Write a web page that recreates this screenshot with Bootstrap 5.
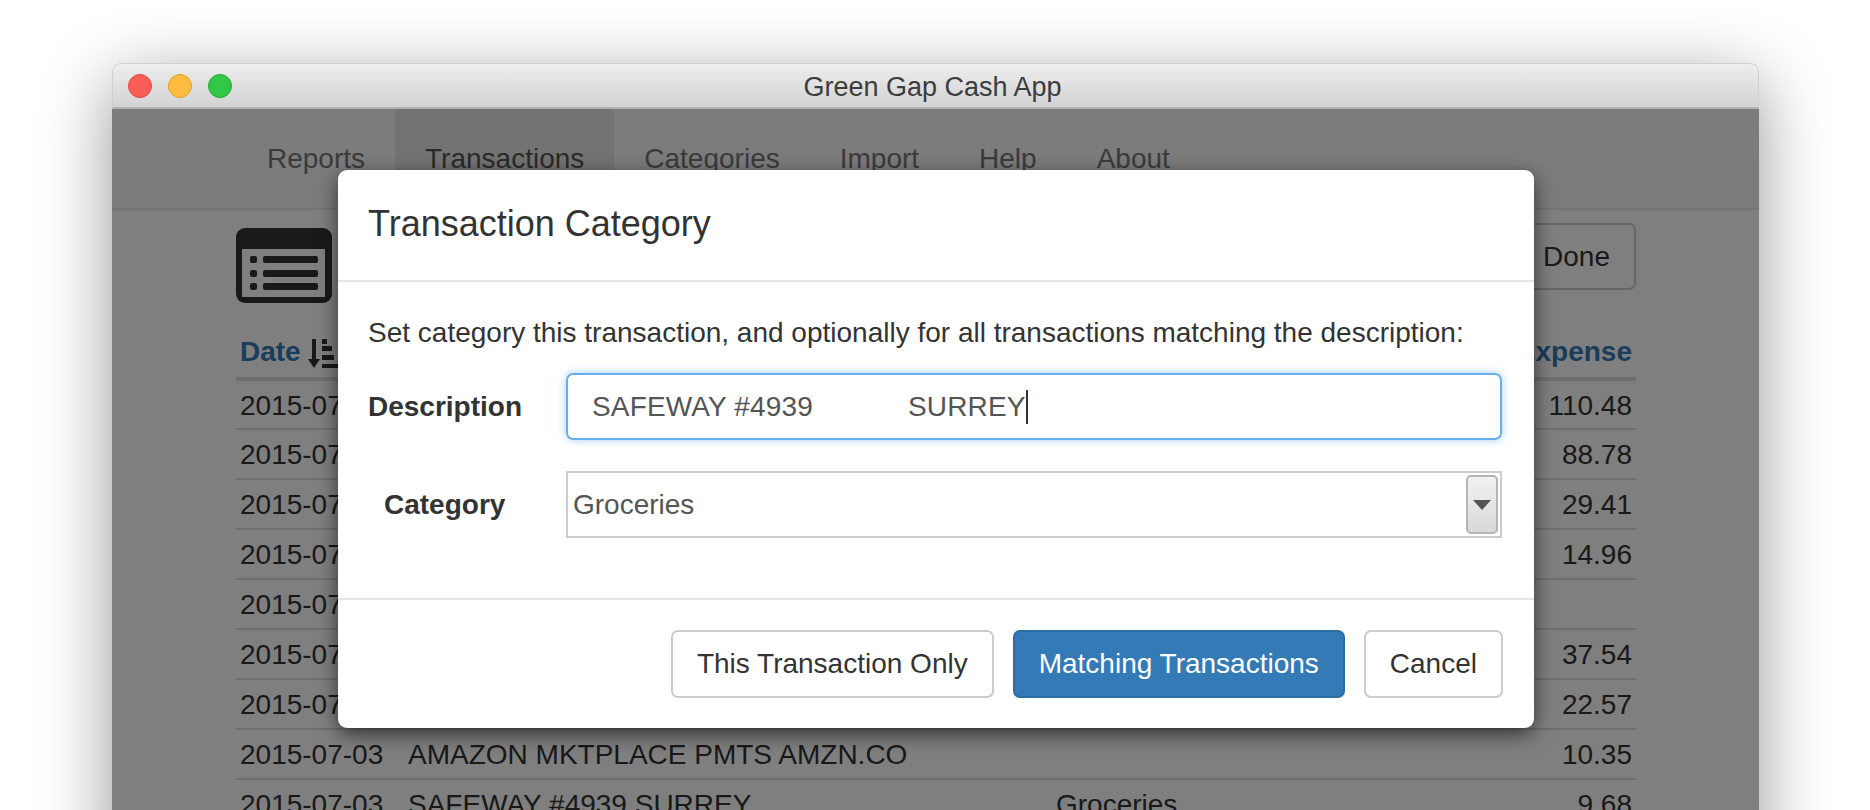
<!DOCTYPE html>
<html lang="en">
<head>
<meta charset="UTF-8">
<title>Green Gap Cash App</title>
<link href="https://cdn.jsdelivr.net/npm/bootstrap@5.3.0/dist/css/bootstrap.min.css" rel="stylesheet">
<style>
html, body { height: 810px; overflow: hidden; }
body {
    background: #fff;
    font-family: "Liberation Sans", Arial, sans-serif;
    font-size: 28px;
    color: #333;
    padding: 63px 111px 0 112px;
}
.app-window {
    height: 800px;
    border-radius: 8px 8px 0 0;
    box-shadow: 0 18px 70px rgba(0, 0, 0, .42);
    position: relative;
    overflow: hidden;
    background: #fff;
}
.app-title {
    height: 46px;
    background: linear-gradient(#ededed, #d3d3d3);
    border: 1px solid #cfcfcf;
    border-bottom: 2px solid #b1b1b1;
    border-radius: 8px 8px 0 0;
    font-size: 27px;
    line-height: 47px;
    color: #3c3c3c;
    text-align: center;
    padding-right: 6px;
    position: relative;
}
.lights { position: absolute; left: 15px; top: 10px; gap: 16px; }
.lights span { width: 24px; height: 24px; border-radius: 50%; display: block; }
.light-red { background: #fc5d57; border: 1px solid #e2453f; }
.light-yellow { background: #fdbc40; border: 1px solid #dfa023; }
.light-green { background: #33c748; border: 1px solid #1fa82f; }
.top-nav {
    height: 101px;
    background: #f8f8f8;
    border-bottom: 2px solid #e7e7e7;
    padding-left: 125px;
}
.top-nav a {
    display: block;
    padding: 0 30px;
    line-height: 100px;
    color: #777;
    text-decoration: none;
    font-size: 28px;
}
.top-nav a.is-active { background: #e7e7e7; color: #555; }
.page-body { padding: 0 123px 0 124px; }
.page-head { height: 122px; padding-top: 13px; }
.head-icon { margin-top: 5px; }
.done-btn {
    width: 118px;
    height: 67px;
    border: 2px solid #ccc;
    border-radius: 7px;
    background: #fff;
    font-size: 28px;
    padding: 0 24px 0 0;
    text-align: right;
    color: #333;
}
.txn-table { width: 100%; border-collapse: collapse; font-size: 28px; }
.txn-table th { color: #337ab7; height: 47px; line-height: 40px; vertical-align: top; font-weight: 700; padding: 0 4px; border-bottom: 4px solid #ddd; }
.txn-table td { height: 50px; padding: 2px 4px 0; border-bottom: 2px solid #ddd; color: #333; white-space: nowrap; }
.col-date { width: 168px; }
.col-desc { width: 648px; }
.amount { text-align: right; }
.backdrop { position: absolute; inset: 46px 0 0; background: rgba(0, 0, 0, .5); }
.txn-dialog {
    position: absolute;
    left: 226px;
    top: 107px;
    width: 1196px;
    height: 558px;
    background: #fff;
    border-radius: 9px;
    box-shadow: 0 6px 20px rgba(0, 0, 0, .6);
}
.dialog-head { height: 112px; border-bottom: 2px solid #e5e5e5; padding: 0 30px; }
.dialog-head h4 { font-size: 36px; font-weight: 400; margin: 0; line-height: 108px; color: #333; }
.dialog-main { height: 318px; border-bottom: 2px solid #e5e5e5; padding: 33px 26px 0 30px; }
.dialog-main p { font-size: 28px; line-height: 36px; margin: 0 0 22px; white-space: nowrap; }
.field-row { gap: 0; margin-bottom: 31px; }
.field-label { width: 198px; font-size: 28px; font-weight: 700; }
.field-desc {
    width: 936px;
    height: 67px;
    border: 2px solid #66afe9;
    border-radius: 7px;
    box-shadow: 0 0 9px rgba(102, 175, 233, .6);
    padding: 0 24px;
    font-size: 28px;
    letter-spacing: .15px;
    color: #555;
    white-space: pre;
    line-height: 63px;
}
.caret-bar { display: inline-block; width: 2px; height: 34px; background: #333; vertical-align: -8px; }
.field-cat {
    width: 936px;
    height: 67px;
    border: 2px solid #ccc;
    padding: 0 2px 0 5px;
    font-size: 28px;
    color: #555;
}
.select-arrow {
    width: 32px;
    height: 59px;
    border: 2px solid #b5b5b5;
    border-radius: 5px;
    background: linear-gradient(#f2f2f2, #d9d9d9);
}
.select-arrow i { border-left: 9px solid transparent; border-right: 9px solid transparent; border-top: 10px solid #555; }
.dialog-foot { padding: 30px 31px 0 0; gap: 19px; }
.foot-btn {
    height: 68px;
    font-size: 28px;
    padding: 0 24px;
    border: 2px solid #ccc;
    border-radius: 7px;
    background: #fff;
    color: #333;
}
.foot-btn.is-primary { background: #337ab7; border-color: #2e6da4; color: #fff; }
</style>
</head>
<body>
<div class="app-window">
    <div class="app-title">
        Green Gap Cash App
        <div class="lights d-flex">
            <span class="light-red"></span><span class="light-yellow"></span><span class="light-green"></span>
        </div>
    </div>
    <nav class="top-nav d-flex">
        <a href="#">Reports</a>
        <a href="#" class="is-active">Transactions</a>
        <a href="#">Categories</a>
        <a href="#">Import</a>
        <a href="#">Help</a>
        <a href="#">About</a>
    </nav>
    <div class="page-body">
        <div class="page-head d-flex justify-content-between align-items-start">
            <svg class="head-icon" width="96" height="75" viewBox="0 0 96 75">
                <rect width="96" height="75" rx="9" fill="#333"/>
                <rect x="6" y="21" width="83" height="48" fill="#fff"/>
                <g fill="#333">
                    <rect x="14" y="28" width="7" height="7" rx="2"/><rect x="27" y="28" width="55" height="7" rx="2"/>
                    <rect x="14" y="42" width="7" height="7" rx="2"/><rect x="27" y="42" width="55" height="7" rx="2"/>
                    <rect x="14" y="55" width="7" height="7" rx="2"/><rect x="27" y="55" width="55" height="7" rx="2"/>
                </g>
            </svg>
            <button class="done-btn">Done</button>
        </div>
        <table class="txn-table">
            <thead>
                <tr>
                    <th class="col-date">Date
                        <svg class="sort-icon" width="30" height="29" viewBox="0 0 30 29" fill="#333"><path d="M4 0h4v20h4l-6 9-6-9h4z"/><rect x="14" y="0" width="5" height="5"/><rect x="14" y="7" width="10" height="5"/><rect x="14" y="16" width="12" height="5"/><rect x="14" y="25" width="16" height="4"/></svg>
                    </th>
                    <th class="col-desc">Description</th>
                    <th>Category</th>
                    <th class="amount">Expense</th>
                </tr>
            </thead>
            <tbody id="txnRows"></tbody>
        </table>
    </div>
    <div class="backdrop"></div>
    <div class="txn-dialog">
        <div class="dialog-head"><h4>Transaction Category</h4></div>
        <div class="dialog-main">
            <p>Set category this transaction, and optionally for all transactions matching the description:</p>
            <div class="field-row d-flex align-items-center">
                <div class="field-label">Description</div>
                <div class="field-desc">SAFEWAY #4939            SURREY<span class="caret-bar"></span></div>
            </div>
            <div class="field-row d-flex align-items-center">
                <div class="field-label ps-3">Category</div>
                <div class="field-cat d-flex align-items-center justify-content-between">
                    <span>Groceries</span>
                    <span class="select-arrow d-flex align-items-center justify-content-center"><i></i></span>
                </div>
            </div>
        </div>
        <div class="dialog-foot d-flex justify-content-end">
            <button class="foot-btn">This Transaction Only</button>
            <button class="foot-btn is-primary">Matching Transactions</button>
            <button class="foot-btn">Cancel</button>
        </div>
    </div>
</div>
<script>
    const rows = [
        ['2015-07-06', 'SAFEWAY #4939 SURREY', 'Groceries', '110.48'],
        ['2015-07-06', 'SUPERSTORE', 'Groceries', '88.78'],
        ['2015-07-06', 'SHELL', 'Auto', '29.41'],
        ['2015-07-06', 'STARBUCKS', 'Dining', '14.96'],
        ['2015-07-05', 'PAYMENT', '', ''],
        ['2015-07-05', 'LONDON DRUGS', 'Household', '37.54'],
        ['2015-07-04', 'WHITE SPOT', 'Dining', '22.57'],
        ['2015-07-03', 'AMAZON MKTPLACE PMTS AMZN.CO', '', '10.35'],
        ['2015-07-03', 'SAFEWAY #4939 SURREY', 'Groceries', '9.68']
    ];
    document.getElementById('txnRows').innerHTML = rows.map(r =>
        `<tr><td>${r[0]}</td><td>${r[1]}</td><td>${r[2]}</td><td class="amount">${r[3]}</td></tr>`
    ).join('');
</script>
<script src="https://cdn.jsdelivr.net/npm/bootstrap@5.3.0/dist/js/bootstrap.bundle.min.js"></script>
</body>
</html>
